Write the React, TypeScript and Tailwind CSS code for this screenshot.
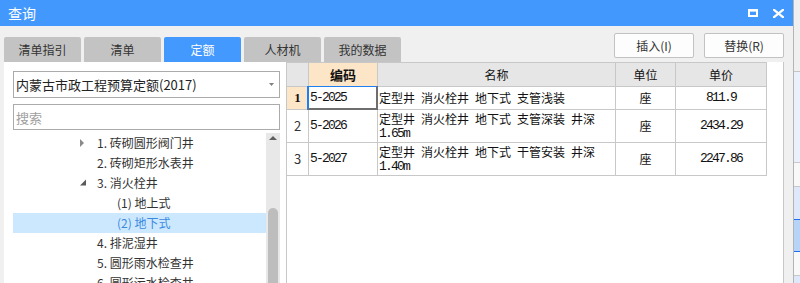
import React from "react";

type TreeRow = { lvl: 1 | 2; text: string; icon?: "right" | "down"; selected?: boolean };

const treeRows: TreeRow[] = [
  { lvl: 1, text: "1. 砖砌圆形阀门井", icon: "right" },
  { lvl: 1, text: "2. 砖砌矩形水表井" },
  { lvl: 1, text: "3. 消火栓井", icon: "down" },
  { lvl: 2, text: "(1) 地上式" },
  { lvl: 2, text: "(2) 地下式", selected: true },
  { lvl: 1, text: "4. 排泥湿井" },
  { lvl: 1, text: "5. 圆形雨水检查井" },
  { lvl: 1, text: "6. 圆形污水检查井" },
];

const tabs = ["清单指引", "清单", "定额", "人材机", "我的数据"];

function Expander({ kind }: { kind?: "right" | "down" }) {
  if (kind === "right") {
    return (
      <svg width="17" height="10" viewBox="0 0 17 10" className="shrink-0">
        <path d="M0 1 L4 5 L0 9 Z" fill="#8a8a8a" />
      </svg>
    );
  }
  if (kind === "down") {
    return (
      <svg width="17" height="10" viewBox="0 0 17 10" className="shrink-0">
        <path d="M6 1.5 L6 7.5 L0 7.5 Z" fill="#5a5a5a" />
      </svg>
    );
  }
  return <span className="w-[17px] shrink-0" />;
}

const mono = "font-['Liberation_Mono',monospace] text-[13px] tracking-[-1.8px] text-[#111]";

export default function App() {
  return (
    <div className="w-[800px] h-[283px] flex overflow-hidden bg-[#f0f0f0] font-['Noto_Sans_CJK_SC','Noto_Sans',sans-serif] text-[#333]">
      {/* dialog */}
      <div className="w-[793px] shrink-0 flex flex-col">
        {/* title bar */}
        <div className="h-[26px] shrink-0 bg-[#4398fe] flex items-center pl-[8px] pr-[9px] text-white">
          <span className="text-[14px] leading-none">查询</span>
          <div className="ml-auto flex items-center gap-[15px]">
            <svg width="10" height="8" viewBox="0 0 10 8">
              <rect x="1" y="1.25" width="8" height="5.75" fill="none" stroke="white" strokeWidth="2" />
              <rect x="0" y="0" width="10" height="2.5" fill="white" />
            </svg>
            <svg width="11" height="9" viewBox="0 0 11 9">
              <path d="M1 0.8 L10 8.2 M10 0.8 L1 8.2" stroke="white" strokeWidth="2.2" strokeLinecap="square" />
            </svg>
          </div>
        </div>

        {/* tabs + buttons */}
        <div className="h-[36px] shrink-0 flex pl-[4px] pr-[9px]">
          <div className="flex items-end gap-[3px]">
            {tabs.map((t) => (
              <div
                key={t}
                className={
                  t === "定额"
                    ? "w-[77px] h-[25px] flex items-center justify-center text-[12px] bg-[#4399fd] text-white rounded-t-[2px]"
                    : "w-[77px] h-[25px] flex items-center justify-center text-[12px] bg-[#c3c3c3] text-[#333] rounded-t-[2px]"
                }
              >
                {t}
              </div>
            ))}
          </div>
          <div className="ml-auto flex gap-[10px] pt-[7px]">
            <button className="w-[80px] h-[25px] bg-[#fdfdfd] border border-[#c2c2c2] rounded-[2px] text-[12px] text-[#333] flex items-center justify-center">
              插入(I)
            </button>
            <button className="w-[80px] h-[25px] bg-[#fdfdfd] border border-[#c2c2c2] rounded-[2px] text-[12px] text-[#333] flex items-center justify-center">
              替换(R)
            </button>
          </div>
        </div>

        {/* main */}
        <div className="flex-1 flex pl-[4px] pr-[9px] min-h-0">
          {/* left panel */}
          <div className="w-[282px] shrink-0 bg-white flex flex-col pl-[9px] pr-[6px] min-h-0">
            <div className="mt-[9px] h-[27px] shrink-0 border border-[#ababab] flex items-center pl-[2px] pr-[5px]">
              <span className="text-[13px] text-[#222] leading-none">内蒙古市政工程预算定额(2017)</span>
              <svg width="5" height="3" viewBox="0 0 5 3" className="ml-auto">
                <path d="M0 0 L5 0 L2.5 3 Z" fill="#808080" />
              </svg>
            </div>
            <div className="mt-[6px] h-[26px] shrink-0 border border-[#ababab] flex items-center pl-[2px]">
              <span className="text-[13px] text-[#a0a0a0] leading-none">搜索</span>
            </div>
            <div className="mt-[3px] flex-1 flex min-h-0 overflow-hidden">
              <div className="w-[253px] shrink-0 flex flex-col">
                {treeRows.map((r) => (
                  <div
                    key={r.text}
                    className={
                      r.selected
                        ? "h-[20px] shrink-0 flex items-center bg-[#cce8ff] text-[#3b8ae0]"
                        : "h-[20px] shrink-0 flex items-center text-[#333]"
                    }
                  >
                    {r.lvl === 1 ? (
                      <div className="pl-[67px] flex items-center">
                        <Expander kind={r.icon} />
                        <span className="text-[12px] leading-none whitespace-nowrap">{r.text}</span>
                      </div>
                    ) : (
                      <div className="pl-[104px] flex items-center">
                        <span className="text-[12px] leading-none whitespace-nowrap">{r.text}</span>
                      </div>
                    )}
                  </div>
                ))}
              </div>
              {/* scrollbar */}
              <div className="w-[14px] shrink-0 bg-[#e8e8e8] flex flex-col items-center">
                <svg width="8" height="4" viewBox="0 0 8 4" className="mt-[3px]">
                  <path d="M0 4 L4 0 L8 4 Z" fill="#606060" />
                </svg>
                <div className="mt-[68px] w-[10px] flex-1 bg-[#bdbdbd] rounded-t-[5px]" />
              </div>
            </div>
          </div>

          {/* right panel */}
          <div className="flex-1 bg-white border-l border-r border-[#c8c8c8] flex flex-col">
            <div className="w-[480px] border-t border-[#c8c8c8] flex flex-col text-[#111]">
              {/* header */}
              <div className="h-[24px] flex border-b border-[#c8c8c8] bg-[#e6e6e6] text-[12px]">
                <div className="w-[22px] border-r border-[#c8c8c8]" />
                <div className="w-[69px] border-r border-[#c8c8c8] bg-[#fde5c8] flex items-center justify-center font-bold text-[13px]">
                  编码
                </div>
                <div className="w-[238px] border-r border-[#c8c8c8] flex items-center justify-center">名称</div>
                <div className="w-[60px] border-r border-[#c8c8c8] flex items-center justify-center">单位</div>
                <div className="w-[91px] border-r border-[#c8c8c8] flex items-center justify-center">单价</div>
              </div>
              {/* row 1 */}
              <div className="h-[23px] flex border-b border-[#c8c8c8] text-[12px]">
                <div className="w-[22px] border-r border-[#c8c8c8] bg-[#fde5c8] flex items-center justify-center font-['Liberation_Serif',serif] font-bold text-[13px]">
                  1
                </div>
                <div className="w-[69px] border-r border-[#c8c8c8] relative flex items-center pl-[1px]">
                  <span className={mono}>5-2025</span>
                  <div className="absolute left-[-2px] top-[-1px] right-[-1px] bottom-[-1px] border-l-2 border-t border-[#1e7ff5] border-r-2 border-b-2 border-r-[#6e6e6e] border-b-[#6e6e6e]" />
                </div>
                <div className="w-[238px] border-r border-[#c8c8c8] flex items-center pl-[1px] [word-spacing:3.3px]">
                  定型井 消火栓井 地下式 支管浅装
                </div>
                <div className="w-[60px] border-r border-[#c8c8c8] flex items-center justify-center">座</div>
                <div className="w-[91px] border-r border-[#c8c8c8] flex items-center justify-center">
                  <span className={mono}>811.9</span>
                </div>
              </div>
              {/* row 2 */}
              <div className="h-[33px] flex border-b border-[#c8c8c8] text-[12px]">
                <div className="w-[22px] border-r border-[#c8c8c8] flex items-center justify-center text-[13px] text-[#333]">
                  2
                </div>
                <div className="w-[69px] border-r border-[#c8c8c8] flex items-center pl-[1px]">
                  <span className={mono}>5-2026</span>
                </div>
                <div className="w-[238px] border-r border-[#c8c8c8] pl-[1px] pt-[2px] leading-[13px] [word-spacing:3.3px]">
                  定型井 消火栓井 地下式 支管深装 井深
                  <br />
                  <span className={mono}>1.65m</span>
                </div>
                <div className="w-[60px] border-r border-[#c8c8c8] flex items-center justify-center">座</div>
                <div className="w-[91px] border-r border-[#c8c8c8] flex items-center justify-center">
                  <span className={mono}>2434.29</span>
                </div>
              </div>
              {/* row 3 */}
              <div className="h-[33px] flex border-b border-[#c8c8c8] text-[12px]">
                <div className="w-[22px] border-r border-[#c8c8c8] flex items-center justify-center text-[13px] text-[#333]">
                  3
                </div>
                <div className="w-[69px] border-r border-[#c8c8c8] flex items-center pl-[1px]">
                  <span className={mono}>5-2027</span>
                </div>
                <div className="w-[238px] border-r border-[#c8c8c8] pl-[1px] pt-[2px] leading-[13px] [word-spacing:3.3px]">
                  定型井 消火栓井 地下式 干管安装 井深
                  <br />
                  <span className={mono}>1.40m</span>
                </div>
                <div className="w-[60px] border-r border-[#c8c8c8] flex items-center justify-center">座</div>
                <div className="w-[91px] border-r border-[#c8c8c8] flex items-center justify-center">
                  <span className={mono}>2247.86</span>
                </div>
              </div>
            </div>
          </div>
        </div>
      </div>

      {/* background window strip */}
      <div className="flex-1 flex flex-col border-l border-[#b4b4b4]">
        <div className="h-[71px] shrink-0 bg-[#f0f0f0]" />
        <div className="h-[1px] shrink-0 bg-[#c4c4c4]" />
        <div className="h-[90px] shrink-0 bg-[#eaf1fc]" />
        <div className="h-[1px] shrink-0 bg-[#c8c8c8]" />
        <div className="h-[23px] shrink-0 bg-[#f8f8f8]" />
        <div className="h-[1px] shrink-0 bg-[#c8c8c8]" />
        <div className="h-[32px] shrink-0 bg-[#dde9fb]" />
        <div className="h-[1px] shrink-0 bg-[#1a6ff0]" />
        <div className="h-[31px] shrink-0 bg-[#b5d4f8]" />
        <div className="h-[1px] shrink-0 bg-[#1a6ff0]" />
        <div className="h-[23px] shrink-0 bg-[#f8f8f8]" />
        <div className="h-[1px] shrink-0 bg-[#c8c8c8]" />
        <div className="flex-1 bg-[#dde9fb]" />
      </div>
    </div>
  );
}
